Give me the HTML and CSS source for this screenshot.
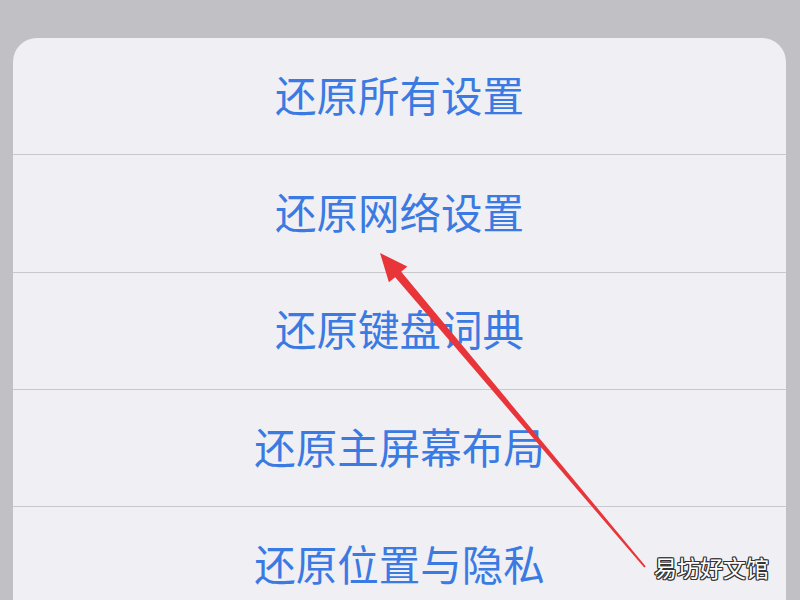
FILE: index.html
```html
<!DOCTYPE html>
<html lang="zh">
<head>
<meta charset="utf-8">
<link rel="stylesheet" href="styles.css">
</head>
<body>
<div class="screen">
  <div class="sheet">
    <div class="row">还原所有设置</div>
    <div class="row">还原网络设置</div>
    <div class="row">还原键盘词典</div>
    <div class="row">还原主屏幕布局</div>
    <div class="row">还原位置与隐私</div>
  </div>
  <svg class="arrow" width="800" height="600" viewBox="0 0 800 600">
    <polygon fill="#e8353a" points="380,253 407.3,266.6 401.2,271.8 645.8,566.4 644.2,567.6 395.2,277.2 388.9,282.2"/>
  </svg>
  <div class="mark">易坊好文馆</div>
</div>
</body>
</html>
```
FILE: styles.css
```css
html, body {
  margin: 0;
  padding: 0;
}
body {
  background: #c1c0c5;
  font-family: "Noto Sans CJK SC", "Noto Sans", sans-serif;
}
.screen {
  position: relative;
  width: 800px;
  height: 600px;
  overflow: hidden;
  background: #c1c0c5;
  padding-top: 38px;
  box-sizing: border-box;
}
.sheet {
  margin-left: 13px;
  width: 773px;
  background: #efeff4;
  border-radius: 24px 24px 0 0;
  height: 600px;
}
.row {
  height: 117.3px;
  border-bottom: 1px solid #c9c8cd;
  display: flex;
  align-items: center;
  justify-content: center;
  color: #3a7ae2;
  font-size: 41.5px;
  line-height: 1;
  padding-bottom: 3px;
  box-sizing: border-box;
}
.arrow {
  position: absolute;
  left: 0;
  top: 0;
}
.mark {
  position: absolute;
  left: 654px;
  top: 550px;
  font-size: 23px;
  color: #ffffff;
  text-shadow: 1px 0 0 #333, -1px 0 0 #333, 0 1px 0 #333, 0 -1px 0 #333, 1px 1px 0 #333, -1px -1px 0 #333, 1px -1px 0 #333, -1px 1px 0 #333;
}
```
